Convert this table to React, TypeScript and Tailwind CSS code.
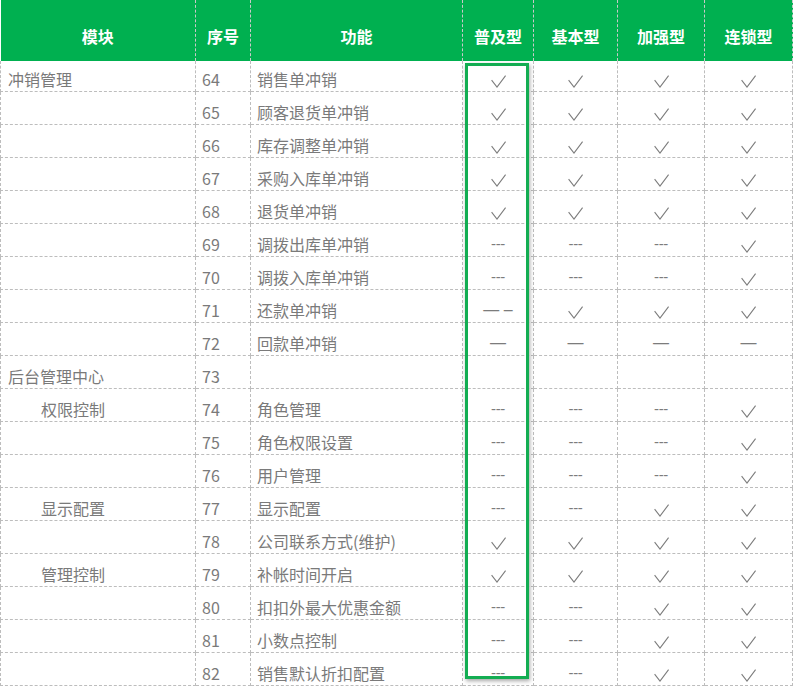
import React from "react";

type Mark = "y" | "s" | "l" | "m" | "";

interface Row {
  mod?: string;
  sub?: boolean;
  no: number;
  name: string;
  marks: Mark[];
}

const rows: Row[] = [
  { mod: "冲销管理", no: 64, name: "销售单冲销", marks: ["y", "y", "y", "y"] },
  { no: 65, name: "顾客退货单冲销", marks: ["y", "y", "y", "y"] },
  { no: 66, name: "库存调整单冲销", marks: ["y", "y", "y", "y"] },
  { no: 67, name: "采购入库单冲销", marks: ["y", "y", "y", "y"] },
  { no: 68, name: "退货单冲销", marks: ["y", "y", "y", "y"] },
  { no: 69, name: "调拨出库单冲销", marks: ["s", "s", "s", "y"] },
  { no: 70, name: "调拨入库单冲销", marks: ["s", "s", "s", "y"] },
  { no: 71, name: "还款单冲销", marks: ["m", "y", "y", "y"] },
  { no: 72, name: "回款单冲销", marks: ["l", "l", "l", "l"] },
  { mod: "后台管理中心", no: 73, name: "", marks: ["", "", "", ""] },
  { mod: "权限控制", sub: true, no: 74, name: "角色管理", marks: ["s", "s", "s", "y"] },
  { no: 75, name: "角色权限设置", marks: ["s", "s", "s", "y"] },
  { no: 76, name: "用户管理", marks: ["s", "s", "s", "y"] },
  { mod: "显示配置", sub: true, no: 77, name: "显示配置", marks: ["s", "s", "y", "y"] },
  { no: 78, name: "公司联系方式(维护)", marks: ["y", "y", "y", "y"] },
  { mod: "管理控制", sub: true, no: 79, name: "补帐时间开启", marks: ["y", "y", "y", "y"] },
  { no: 80, name: "扣扣外最大优惠金额", marks: ["s", "s", "y", "y"] },
  { no: 81, name: "小数点控制", marks: ["s", "s", "y", "y"] },
  { no: 82, name: "销售默认折扣配置", marks: ["s", "s", "y", "y"] },
];

const heads = ["模块", "序号", "功能", "普及型", "基本型", "加强型", "连锁型"];
const widths = ["w-[195px]", "w-[55px]", "w-[212px]", "w-[71px]", "w-[84px]", "w-[87px]", "w-[88px]"];

function Check() {
  return (
    <svg width="15" height="13" viewBox="0 0 15 13" className="inline-block">
      <polyline
        points="0.6,5.2 6,12 14.6,0.6"
        fill="none"
        stroke="#7c7c7c"
        strokeWidth="1.1"
      />
    </svg>
  );
}

function MarkCell({ m }: { m: Mark }) {
  if (m === "y") return <Check />;
  if (m === "s")
    return <span className="font-['Liberation_Sans'] text-[15px] tracking-[-0.3px] text-[#7c7c7c]">---</span>;
  if (m === "l")
    return <span className="font-['Liberation_Sans'] text-[16px] text-[#7c7c7c]">—</span>;
  if (m === "m")
    return <span className="font-['Liberation_Sans'] text-[16px] text-[#7c7c7c]">— –</span>;
  return null;
}

export default function App() {
  const base = "border border-dashed border-[#bdbdbd] align-bottom pb-[2px] leading-[20px]";
  return (
    <div className="relative w-[793px] h-[686px] overflow-hidden bg-white font-['Noto_Sans_CJK_SC',sans-serif]">
      <table className="table-fixed border-collapse w-[792px] text-[16px] text-[#7a7a7a]">
        <colgroup>
          {widths.map((w, i) => (
            <col key={i} className={w} />
          ))}
        </colgroup>
        <thead>
          <tr className="bg-[#00b050]">
            {heads.map((h, i) => (
              <th
                key={h}
                className={
                  "h-[61px] align-bottom pb-[15px] leading-[20px] text-center font-bold text-white border-dashed border-[#c9c9c9] border-t-0 border-b-0 " +
                  (i === 0 ? "border-l-0 border-r" : "border-x")
                }
              >
                {h}
              </th>
            ))}
          </tr>
        </thead>
        <tbody>
          {rows.map((r, idx) => {
            const cell = base + (idx === 0 ? " h-[30px] border-t-0" : " h-[33px]");
            return (
              <tr key={r.no}>
                <td className={cell + (r.sub ? " pl-[40px]" : " pl-[7px]")}>{r.mod}</td>
                <td className={cell + " pl-[6px]"}>{r.no}</td>
                <td className={cell + " pl-[6px]"}>{r.name}</td>
                {r.marks.map((m, j) => (
                  <td key={j} className={cell + " text-center"}>
                    <MarkCell m={m} />
                  </td>
                ))}
              </tr>
            );
          })}
        </tbody>
      </table>
      <div className="absolute left-[465px] top-[63px] w-[64px] h-[616px] border-[3px] border-[#13ad52] shadow-[1px_2px_4px_rgba(0,0,0,0.35)]" />
    </div>
  );
}
